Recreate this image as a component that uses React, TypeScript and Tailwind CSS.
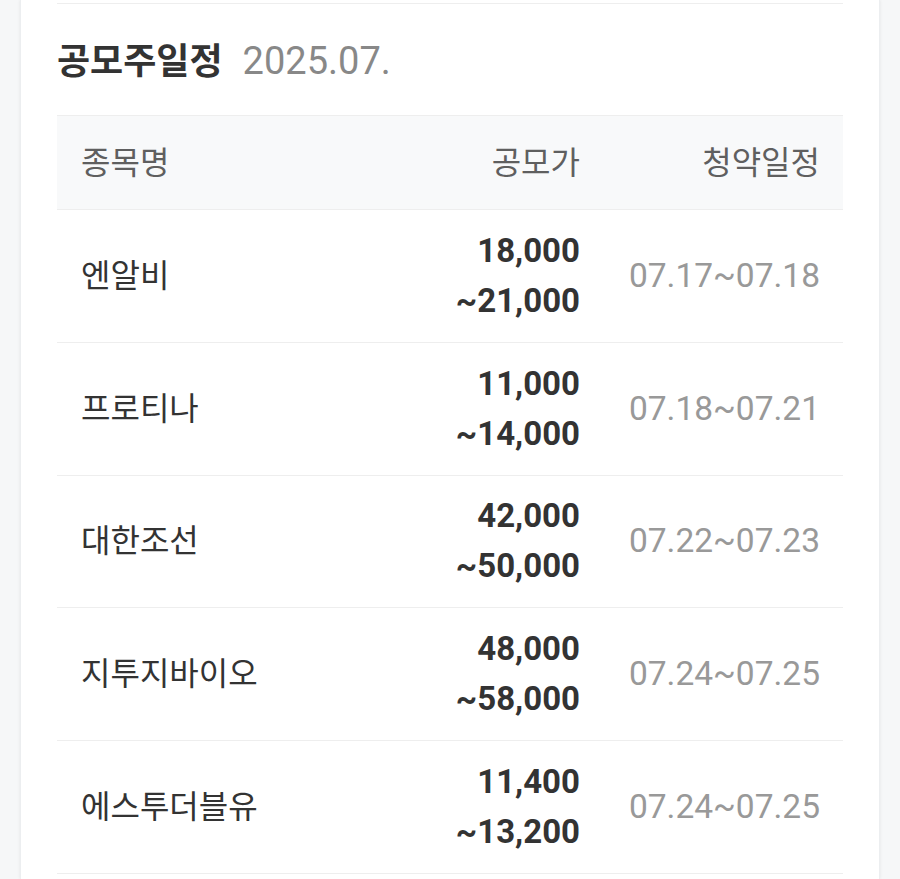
import React from "react";

const rows = [
  { name: "엔알비", p1: "18,000", p2: "~21,000", date: "07.17~07.18" },
  { name: "프로티나", p1: "11,000", p2: "~14,000", date: "07.18~07.21" },
  { name: "대한조선", p1: "42,000", p2: "~50,000", date: "07.22~07.23" },
  { name: "지투지바이오", p1: "48,000", p2: "~58,000", date: "07.24~07.25" },
  { name: "에스투더블유", p1: "11,400", p2: "~13,200", date: "07.24~07.25" },
];

export default function App() {
  return (
    <div
      className="min-h-screen bg-[#f6f7f8] px-[20px]"
      style={{ fontFamily: "Roboto, 'Noto Sans CJK KR', sans-serif" }}
    >
      <div className="min-h-[879px] bg-white px-[36px] shadow-[0_0_3px_rgba(0,0,0,0.08)] border-x border-[#eceef0]">
        <div className="h-[4px] border-b border-[#eeeeee]" />
        <div className="flex items-baseline gap-[20px] pt-[35px] pb-[31px] leading-[44px]">
          <span className="text-[36px] font-bold text-[#333333]">공모주일정</span>
          <span className="text-[38px] text-[#888888]">2025.07.</span>
        </div>
        <div className="border-t border-[#eeeeee]">
          <div className="grid grid-cols-[1fr_260px_240px] items-center h-[94px] bg-[#f8f9fa] border-b border-[#eeeeee] pl-[24px] pr-[23px] text-[32px] text-[#5f5f5f]">
            <div>종목명</div>
            <div className="text-right">공모가</div>
            <div className="text-right">청약일정</div>
          </div>
          {rows.map((r) => (
            <div
              key={r.name}
              className="grid grid-cols-[1fr_260px_240px] items-center h-[132.8px] border-b border-[#eeeeee] pl-[24px] pr-[23px]"
            >
              <div className="text-[32px] text-[#333333]">{r.name}</div>
              <div className="text-right text-[33px] font-bold text-[#333333] leading-[50px]">
                <div>{r.p1}</div>
                <div>{r.p2}</div>
              </div>
              <div className="text-right text-[33.5px] text-[#999999]">{r.date}</div>
            </div>
          ))}
        </div>
      </div>
    </div>
  );
}
